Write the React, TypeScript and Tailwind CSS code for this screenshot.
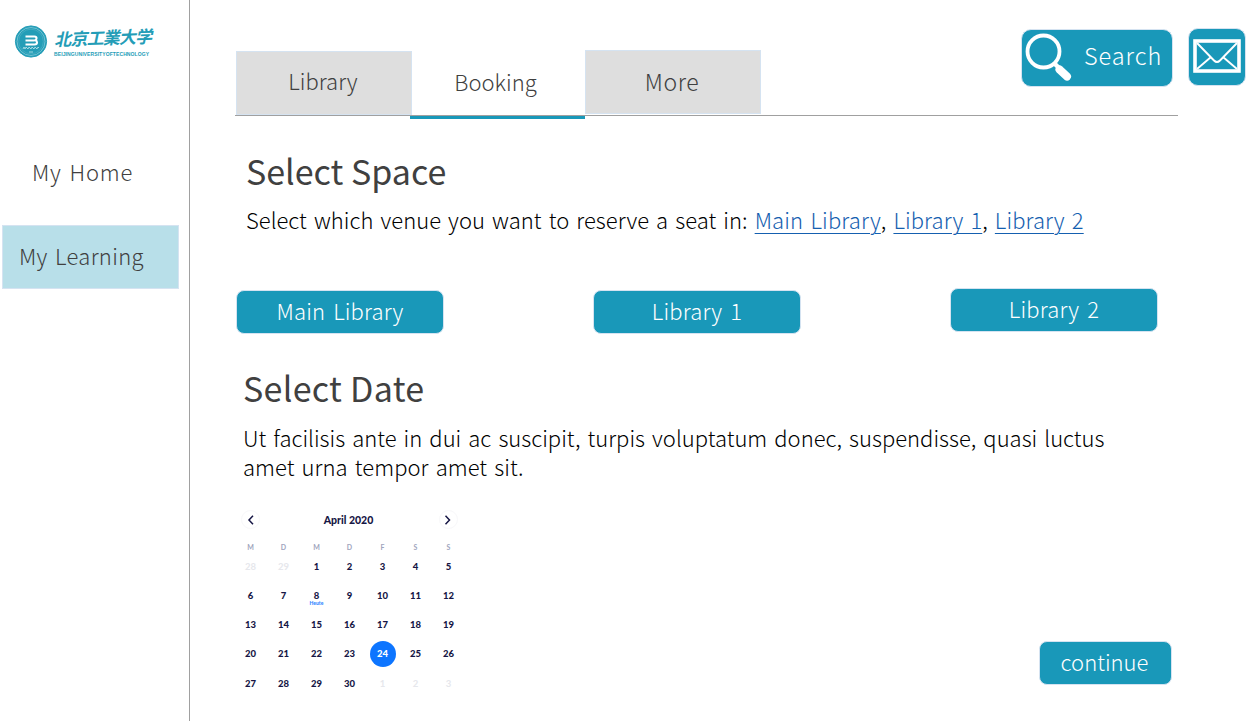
import type { ReactNode } from 'react';

const WEEKDAYS = ['M', 'D', 'M', 'D', 'F', 'S', 'S'];
const DAYS = [28, 29, ...Array.from({ length: 30 }, (_, i) => i + 1), 1, 2, 3];
const SELECTED = 25;
const TODAY = 9;

function Logo() {
  return (
    <div className="flex h-[34px] items-center">
      <svg viewBox="0 0 34 34" className="h-[34px] w-[34px] shrink-0" fill="none">
        <circle cx="17" cy="17.500" r="15.6" fill="#249db7" stroke="#249db7" strokeWidth="1" />
        <circle cx="17" cy="17.500" r="14" stroke="#8fd0dc" strokeWidth=".7" />
        <circle cx="17" cy="17.500" r="12.3" stroke="#5cb7c9" strokeWidth=".5" />
        <path d="M11.500 12.500h9q2 0 2 1.800 0 1.500-1.200 2 1.700.4 1.700 2.200 0 2-2.500 2h-9M11.500 16.500h9" stroke="#fff" strokeWidth="2.100" />
        <path d="M9 25l1-2 1 2 1-2 2 2 1-2 2 2 1-2 2 2 1-2 2 2 1-2 1 1M15 28h4" stroke="#bfe4eb" strokeWidth=".8" />
      </svg>
      <div className="ml-[5px] mt-[1px] flex flex-col">
        <span className="h-[24px] origin-left -rotate-2 whitespace-nowrap pl-[1px] font-['Noto_Sans_CJK_JP',sans-serif] text-[17px] font-bold italic leading-[25px] tracking-[-0.800px] text-[#249db7]">北京工業大学</span>
        <span className="ml-[1px] mt-[1px] h-[6px] whitespace-nowrap font-['Liberation_Sans'] text-[5px] font-bold leading-[6px] tracking-[0.100px] text-[#249db7]">BEIJINGUNIVERSITYOFTECHNOLOGY</span>
      </div>
    </div>
  );
}

function VenueButton({ children, className = '' }: { children: ReactNode; className?: string }) {
  return (
    <button className={`flex h-[44px] w-[208px] items-center justify-center rounded-[8px] border border-[#d5e3f1] bg-[#1998b9] pb-[4px] tracking-[0.150px] text-white [word-spacing:3px] ${className}`}>
      {children}
    </button>
  );
}

function Calendar() {
  return (
    <div className="mt-[27px] w-[231px] font-['Lato',sans-serif] font-black text-[#161645] [word-spacing:0px]">
      <div className="flex h-[24px] items-center justify-between pl-[7px] pr-[7px]">
        <button className="-mt-[1px] flex h-[19px] w-[19px] items-center justify-center rounded-full border border-[#f8f8fa]">
          <svg viewBox="0 0 10 10" className="h-[10px] w-[10px]" fill="none" stroke="#161645" strokeWidth="1.500"><path d="M7 .8L3 5l4 4.200" /></svg>
        </button>
        <span className="pr-[2px] text-[10.500px]">April 2020</span>
        <button className="-mt-[1px] flex h-[19px] w-[19px] items-center justify-center rounded-full border border-[#f8f8fa]">
          <svg viewBox="0 0 10 10" className="h-[10px] w-[10px]" fill="none" stroke="#161645" strokeWidth="1.500"><path d="M2.500 .8L6.500 5l-4 4.200" /></svg>
        </button>
      </div>
      <div className="mt-[8px] grid h-[14px] grid-cols-7 text-center text-[7px] font-bold leading-[14px] text-[#a0a5bd]">
        {WEEKDAYS.map((d, i) => <span key={i}>{d}</span>)}
      </div>
      <div className="mt-[-2px] grid auto-rows-[29.250px] grid-cols-7 place-items-center text-[9.500px] leading-[10px]">
        {DAYS.map((d, i) => (
          <div key={i} className={i === SELECTED ? 'flex h-[26px] w-[26px] items-center justify-center rounded-full bg-[#0d75ff] text-white' : i < 2 || i > 31 ? 'font-bold text-[#e6e7ec]' : 'relative'}>
            {d}
            {i === TODAY && <span className="absolute left-1/2 top-[9px] -translate-x-1/2 text-[5px] leading-[6px] text-[#3187ff]">Heute</span>}
          </div>
        ))}
      </div>
    </div>
  );
}

export default function App() {
  return (
    <div className="flex h-[721px] w-[1246px] overflow-hidden bg-white font-['Noto_Sans_CJK_SC',sans-serif] text-[22px] font-light leading-[29px] text-black [word-spacing:2.200px]">
      <aside className="w-[190px] shrink-0 border-r border-[#a0a0a0]">
        <div className="pl-[14px] pt-[24px]"><Logo /></div>
        <nav className="mt-[83px] flex flex-col text-[#404040]">
          <a className="flex h-[64px] items-center pb-[3px] pl-[32px] tracking-[0.800px]">My Home</a>
          <a className="ml-[2px] mt-[20px] flex h-[64px] w-[177px] items-center border border-[#d5e3f1] bg-[#b8dfe9] pb-[4px] pl-[16px] tracking-[0.300px]">My Learning</a>
        </nav>
      </aside>
      <main className="w-[1056px]">
        <header className="flex h-[116px] items-start">
          <nav className="ml-[45px] flex h-[116px] w-[943px] items-end border-b border-[#a0a0a0] text-[#404040]">
            <a className="ml-[1px] flex h-[64px] w-[176px] items-center justify-center border border-[#d5e3f1] bg-[#dedede] pb-[6px] pr-[2px]">Library</a>
            <a className="-mb-[4px] -ml-[2px] flex h-[68px] w-[175px] items-center justify-center border-b-[3px] border-[#1998b9] pb-[4px] pr-[4px]">Booking</a>
            <a className="mb-[1px] flex h-[64px] w-[176px] items-center justify-center border border-[#d5e3f1] bg-[#dedede] pb-[2px] pr-[2px] text-[23px] tracking-[0.600px]">More</a>
            <button className="ml-auto mr-[5px] mt-[29px] flex h-[58px] w-[152px] items-center self-start rounded-[10px] border border-[#d5e3f1] bg-[#1998b9] text-white">
              <svg viewBox="0 0 50 50" className="ml-[2px] h-[50px] w-[50px] shrink-0" fill="none" stroke="#fff">
                <circle cx="19.500" cy="18.500" r="16" strokeWidth="3.800" />
                <path d="M30.500 30.500l5 5" strokeWidth="4.500" />
                <path d="M35.500 36.500l7.500 7" strokeWidth="8" strokeLinecap="round" />
              </svg>
              <span className="ml-[10px] pb-[6px] text-[23.500px] tracking-[0.950px]">Search</span>
            </button>
          </nav>
          <button className="ml-[10px] mt-[28px] flex h-[58px] w-[58px] shrink-0 items-center justify-center rounded-[10px] border border-[#d5e3f1] bg-[#1998b9]">
            <svg viewBox="0 0 48 34" className="-mt-[2px] h-[34px] w-[48px]" fill="none" stroke="#fff">
              <rect x="2" y="2" width="44" height="30" strokeWidth="3.600" />
              <path d="M4 4l17 17.500q3 3 6 0L44 4M4 30l14-12M44 30L30 18" strokeWidth="1.900" />
            </svg>
          </button>
        </header>
        <section className="pl-[56px] pt-[35px]">
          <h1 className="h-[40px] text-[34px] font-normal leading-[40px] text-[#404040] [word-spacing:0px]">Select Space</h1>
          <p className="mt-[14px] whitespace-nowrap">
            <span className="tracking-[0.020px]">Select which venue you want to reserve a seat in: </span>
            <a className="tracking-[0.150px] text-[#1560b0] underline decoration-1 underline-offset-[4px]">Main Library</a>,{' '}
            <a className="tracking-[0.080px] text-[#1560b0] underline decoration-1 underline-offset-[4px]">Library 1</a>,{' '}
            <a className="tracking-[0.080px] text-[#1560b0] underline decoration-1 underline-offset-[4px]">Library 2</a>
          </p>
        </section>
        <div className="mt-[56px] flex h-[43px] items-start gap-[149px] pl-[46px]">
          <VenueButton>Main Library</VenueButton>
          <VenueButton>Library 1</VenueButton>
          <VenueButton className="-mt-[2px]">Library 2</VenueButton>
        </div>
        <section className="pl-[53px] pt-[35px]">
          <h2 className="h-[40px] text-[34px] font-normal leading-[40px] tracking-[0.300px] text-[#404040] [word-spacing:0px]">Select Date</h2>
          <div className="mt-[15px] whitespace-nowrap">
            <p>Ut facilisis ante in dui ac suscipit, turpis voluptatum donec, suspendisse, quasi luctus</p>
            <p className="tracking-[0.050px]">amet urna tempor amet sit.</p>
          </div>
        </section>
        <div className="flex h-[200px] items-start justify-between pl-[44px] pr-[74px]">
          <Calendar />
          <button className="mt-[160px] flex h-[44px] w-[133px] items-center justify-center rounded-[8px] border border-[#d5e3f1] bg-[#1998b9] pb-[3px] pr-[2px] text-white">continue</button>
        </div>
      </main>
    </div>
  );
}
